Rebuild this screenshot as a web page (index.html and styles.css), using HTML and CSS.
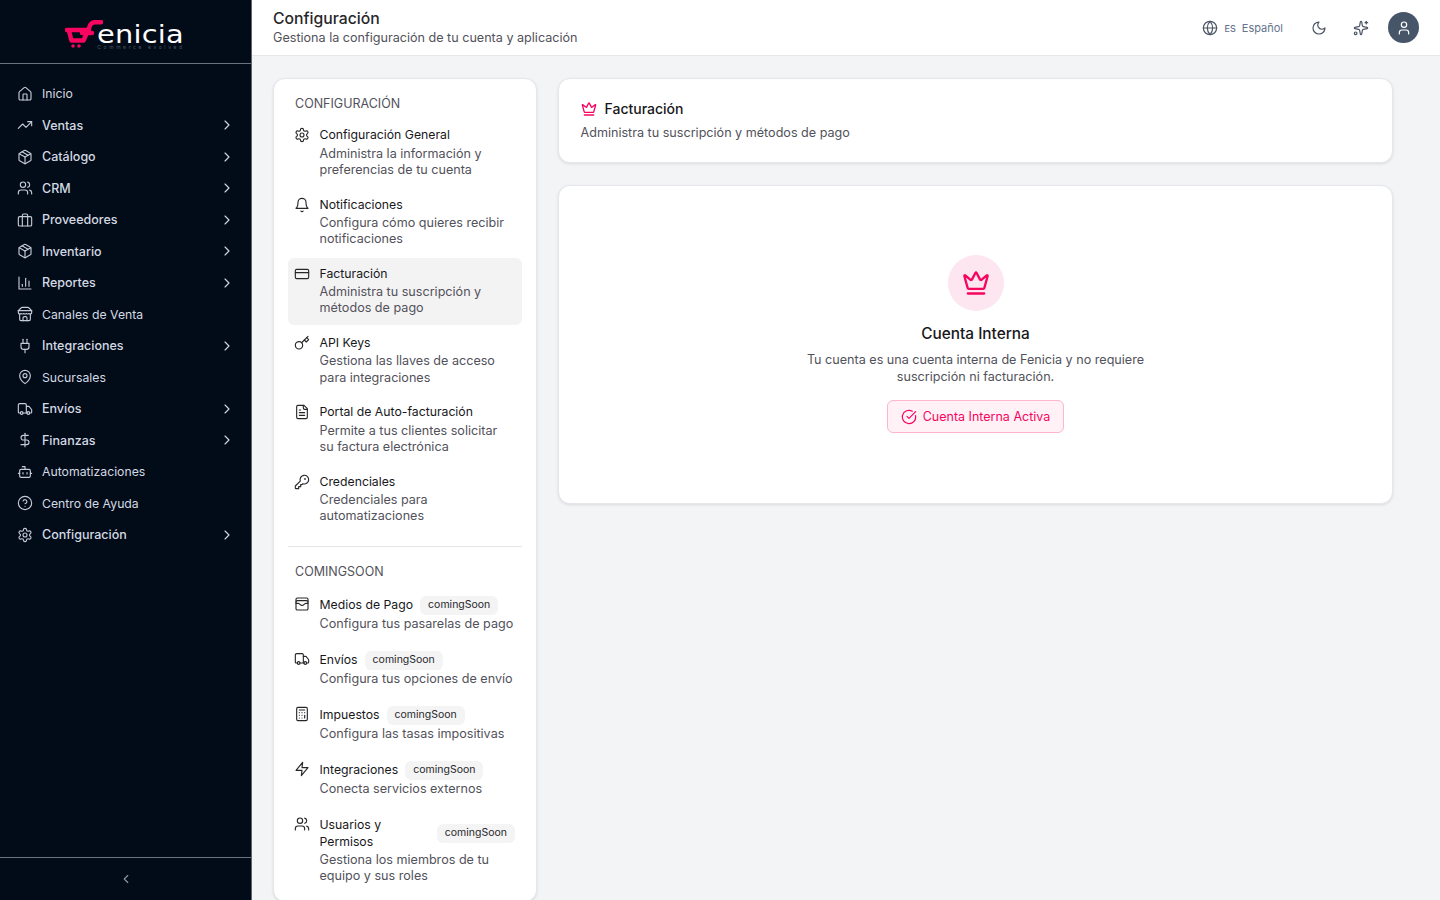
FILE: index.html
```html
<!DOCTYPE html>
<html lang="es">
<head>
<meta charset="utf-8">
<title>Configuración</title>
<link rel="stylesheet" href="styles.css">
</head>
<body>
<svg class="sprite" xmlns="http://www.w3.org/2000/svg">
<symbol id="i-home" viewBox="0 0 24 24"><path d="M15 21v-8a1 1 0 0 0-1-1h-4a1 1 0 0 0-1 1v8"/><path d="M3 10a2 2 0 0 1 .709-1.528l7-5.999a2 2 0 0 1 2.582 0l7 5.999A2 2 0 0 1 21 10v9a2 2 0 0 1-2 2H5a2 2 0 0 1-2-2z"/></symbol>
<symbol id="i-trend" viewBox="0 0 24 24"><polyline points="22 7 13.5 15.5 8.5 10.5 2 17"/><polyline points="16 7 22 7 22 13"/></symbol>
<symbol id="i-package" viewBox="0 0 24 24"><path d="M11 21.730a2 2 0 0 0 2 0l7-4A2 2 0 0 0 21 16V8a2 2 0 0 0-1-1.730l-7-4a2 2 0 0 0-2 0l-7 4A2 2 0 0 0 3 8v8a2 2 0 0 0 1 1.730z"/><path d="M12 22V12"/><path d="m3.300 7 8.700 5 8.700-5"/><path d="m7.500 4.270 9 5.150"/></symbol>
<symbol id="i-users" viewBox="0 0 24 24"><path d="M16 21v-2a4 4 0 0 0-4-4H6a4 4 0 0 0-4 4v2"/><circle cx="9" cy="7" r="4"/><path d="M22 21v-2a4 4 0 0 0-3-3.870"/><path d="M16 3.130a4 4 0 0 1 0 7.750"/></symbol>
<symbol id="i-briefcase" viewBox="0 0 24 24"><rect x="2" y="7" width="20" height="14" rx="2"/><path d="M16 21V5a2 2 0 0 0-2-2h-4a2 2 0 0 0-2 2v16"/></symbol>
<symbol id="i-chart" viewBox="0 0 24 24"><path d="M3 3v18h18"/><path d="M18 17V9"/><path d="M13 17V5"/><path d="M8 17v-3"/></symbol>
<symbol id="i-store" viewBox="0 0 24 24"><path d="m2 7 4.410-4.410A2 2 0 0 1 7.830 2h8.340a2 2 0 0 1 1.420.590L22 7"/><path d="M4 12v8a2 2 0 0 0 2 2h12a2 2 0 0 0 2-2v-8"/><path d="M15 22v-4a2 2 0 0 0-2-2h-2a2 2 0 0 0-2 2v4"/><path d="M2 7h20"/><path d="M22 7v3a2 2 0 0 1-2 2a2.700 2.700 0 0 1-1.590-.630.700.700 0 0 0-.820 0A2.700 2.700 0 0 1 16 12a2.700 2.700 0 0 1-1.590-.630.700.700 0 0 0-.820 0A2.700 2.700 0 0 1 12 12a2.700 2.700 0 0 1-1.590-.630.700.700 0 0 0-.820 0A2.700 2.700 0 0 1 8 12a2.700 2.700 0 0 1-1.590-.630.700.700 0 0 0-.820 0A2.700 2.700 0 0 1 4 12a2 2 0 0 1-2-2V7"/></symbol>
<symbol id="i-plug" viewBox="0 0 24 24"><path d="M12 22v-5"/><path d="M9 8V2"/><path d="M15 8V2"/><path d="M18 8v5a4 4 0 0 1-4 4h-4a4 4 0 0 1-4-4V8Z"/></symbol>
<symbol id="i-pin" viewBox="0 0 24 24"><path d="M20 10c0 6-8 12-8 12s-8-6-8-12a8 8 0 0 1 16 0Z"/><circle cx="12" cy="10" r="3"/></symbol>
<symbol id="i-truck" viewBox="0 0 24 24"><path d="M14 18V6a2 2 0 0 0-2-2H4a2 2 0 0 0-2 2v11a1 1 0 0 0 1 1h2"/><path d="M15 18H9"/><path d="M19 18h2a1 1 0 0 0 1-1v-3.650a1 1 0 0 0-.220-.624l-3.480-4.350A1 1 0 0 0 17.520 8H14"/><circle cx="17" cy="18" r="2"/><circle cx="7" cy="18" r="2"/></symbol>
<symbol id="i-dollar" viewBox="0 0 24 24"><path d="M12 2v20"/><path d="M17 5H9.500a3.500 3.500 0 0 0 0 7h5a3.500 3.500 0 0 1 0 7H6"/></symbol>
<symbol id="i-bot" viewBox="0 0 24 24"><path d="M12 8V4H8"/><rect x="4" y="8" width="16" height="12" rx="2"/><path d="M2 14h2"/><path d="M20 14h2"/><path d="M15 13v2"/><path d="M9 13v2"/></symbol>
<symbol id="i-help" viewBox="0 0 24 24"><circle cx="12" cy="12" r="10"/><path d="M9.090 9a3 3 0 0 1 5.830 1c0 2-3 3-3 3"/><path d="M12 17h.010"/></symbol>
<symbol id="i-gear" viewBox="0 0 24 24"><path d="M12.220 2h-.440a2 2 0 0 0-2 2v.180a2 2 0 0 1-1 1.730l-.430.250a2 2 0 0 1-2 0l-.150-.080a2 2 0 0 0-2.730.730l-.220.380a2 2 0 0 0 .730 2.730l.150.100a2 2 0 0 1 1 1.720v.510a2 2 0 0 1-1 1.740l-.150.090a2 2 0 0 0-.730 2.730l.220.380a2 2 0 0 0 2.730.730l.150-.080a2 2 0 0 1 2 0l.430.250a2 2 0 0 1 1 1.730V20a2 2 0 0 0 2 2h.440a2 2 0 0 0 2-2v-.180a2 2 0 0 1 1-1.730l.430-.250a2 2 0 0 1 2 0l.150.080a2 2 0 0 0 2.730-.730l.220-.390a2 2 0 0 0-.730-2.730l-.150-.080a2 2 0 0 1-1-1.740v-.500a2 2 0 0 1 1-1.740l.150-.090a2 2 0 0 0 .730-2.730l-.220-.380a2 2 0 0 0-2.730-.730l-.150.080a2 2 0 0 1-2 0l-.430-.250a2 2 0 0 1-1-1.730V4a2 2 0 0 0-2-2z"/><circle cx="12" cy="12" r="3"/></symbol>
<symbol id="i-bell" viewBox="0 0 24 24"><path d="M6 8a6 6 0 0 1 12 0c0 7 3 9 3 9H3s3-2 3-9"/><path d="M10.300 21a1.940 1.940 0 0 0 3.400 0"/></symbol>
<symbol id="i-card" viewBox="0 0 24 24"><rect x="2" y="5" width="20" height="14" rx="2"/><path d="M2 10h20"/></symbol>
<symbol id="i-key" viewBox="0 0 24 24"><circle cx="7.500" cy="15.500" r="5.500"/><path d="m21 2-9.600 9.600"/><path d="m15.500 7.500 3 3L22 7l-3-3"/></symbol>
<symbol id="i-file" viewBox="0 0 24 24"><path d="M15 2H6a2 2 0 0 0-2 2v16a2 2 0 0 0 2 2h12a2 2 0 0 0 2-2V7Z"/><path d="M14 2v4a2 2 0 0 0 2 2h4"/><path d="M10 9H8"/><path d="M16 13H8"/><path d="M16 17H8"/></symbol>
<symbol id="i-keyround" viewBox="0 0 24 24"><path d="M2 18v3c0 .600.400 1 1 1h4v-3h3v-3h2l1.400-1.400a6.500 6.500 0 1 0-4-4Z"/><circle cx="16.500" cy="7.500" r=".500"/></symbol>
<symbol id="i-wallet" viewBox="0 0 24 24"><rect x="3" y="3" width="18" height="18" rx="2"/><path d="M3 9a2 2 0 0 1 2-2h14a2 2 0 0 1 2 2"/><path d="M3 11h3c.800 0 1.600.300 2.100.900l1.100.900c1.600 1.600 4.100 1.600 5.700 0l1.100-.900c.500-.500 1.300-.900 2.100-.900H21"/></symbol>
<symbol id="i-calc" viewBox="0 0 24 24"><rect x="4" y="2" width="16" height="20" rx="2"/><path d="M8 6h8"/><path d="M16 14v4"/><path d="M16 10h.010"/><path d="M12 10h.010"/><path d="M8 10h.010"/><path d="M12 14h.010"/><path d="M8 14h.010"/><path d="M12 18h.010"/><path d="M8 18h.010"/></symbol>
<symbol id="i-zap" viewBox="0 0 24 24"><path d="M13 2 3 14h9l-1 8 10-12h-9l1-8z"/></symbol>
<symbol id="i-globe" viewBox="0 0 24 24"><circle cx="12" cy="12" r="10"/><path d="M12 2a14.500 14.500 0 0 0 0 20 14.500 14.500 0 0 0 0-20"/><path d="M2 12h20"/></symbol>
<symbol id="i-moon" viewBox="0 0 24 24"><path d="M12 3a6 6 0 0 0 9 9 9 9 0 1 1-9-9Z"/></symbol>
<symbol id="i-sparkles" viewBox="0 0 24 24"><path d="M11.017 2.814a1 1 0 0 1 1.966 0l1.051 5.558a2 2 0 0 0 1.594 1.594l5.558 1.051a1 1 0 0 1 0 1.966l-5.558 1.051a2 2 0 0 0-1.594 1.594l-1.051 5.558a1 1 0 0 1-1.966 0l-1.051-5.558a2 2 0 0 0-1.594-1.594l-5.558-1.051a1 1 0 0 1 0-1.966l5.558-1.051a2 2 0 0 0 1.594-1.594z"/><path d="M20 2v4"/><path d="M22 4h-4"/><circle cx="4" cy="20" r="2"/></symbol>
<symbol id="i-user" viewBox="0 0 24 24"><path d="M19 21v-2a4 4 0 0 0-4-4H9a4 4 0 0 0-4 4v2"/><circle cx="12" cy="7" r="4"/></symbol>
<symbol id="i-crown" viewBox="0 0 24 24"><path d="M11.562 3.266a.500.500 0 0 1 .876 0L15.390 8.870a1 1 0 0 0 1.516.294L21.183 5.500a.500.500 0 0 1 .798.519l-2.834 10.246a1 1 0 0 1-.956.734H5.810a1 1 0 0 1-.957-.734L2.020 6.020a.500.500 0 0 1 .798-.519l4.276 3.664a1 1 0 0 0 1.516-.294z"/><path d="M5 21h14"/></symbol>
<symbol id="i-check" viewBox="0 0 24 24"><path d="M21.801 10A10 10 0 1 1 17 3.335"/><path d="m9 11 3 3L22 4"/></symbol>
<symbol id="i-right" viewBox="0 0 24 24"><path d="m9 18 6-6-6-6"/></symbol>
<symbol id="i-left" viewBox="0 0 24 24"><path d="m15 18-6-6 6-6"/></symbol>
</svg>

<div class="app">
  <aside class="sidebar">
    <div class="brand">
      <div class="logo">
        <svg class="logo-mark" viewBox="0 0 38 28" xmlns="http://www.w3.org/2000/svg">
          <path class="logo-cart" d="M2 10H24M4 11l2.500 9.500h12L24 8C25 4 27 2.200 30 2.200h6M17 13h10"/>
          <circle class="logo-wheel" cx="8" cy="26" r="1.800"/>
          <circle class="logo-wheel" cx="14" cy="26" r="1.800"/>
        </svg>
        <div class="logo-words">
          <span class="logo-name">enicia</span>
          <span class="logo-tag">Commerce evolved</span>
        </div>
      </div>
    </div>
    <nav class="nav">
      <a class="nav-item"><svg class="ico"><use href="#i-home"/></svg><span>Inicio</span></a>
      <a class="nav-item sub"><svg class="ico"><use href="#i-trend"/></svg><span>Ventas</span><svg class="chev"><use href="#i-right"/></svg></a>
      <a class="nav-item sub"><svg class="ico"><use href="#i-package"/></svg><span>Catálogo</span><svg class="chev"><use href="#i-right"/></svg></a>
      <a class="nav-item sub"><svg class="ico"><use href="#i-users"/></svg><span>CRM</span><svg class="chev"><use href="#i-right"/></svg></a>
      <a class="nav-item sub"><svg class="ico"><use href="#i-briefcase"/></svg><span>Proveedores</span><svg class="chev"><use href="#i-right"/></svg></a>
      <a class="nav-item sub"><svg class="ico"><use href="#i-package"/></svg><span>Inventario</span><svg class="chev"><use href="#i-right"/></svg></a>
      <a class="nav-item sub"><svg class="ico"><use href="#i-chart"/></svg><span>Reportes</span><svg class="chev"><use href="#i-right"/></svg></a>
      <a class="nav-item"><svg class="ico"><use href="#i-store"/></svg><span>Canales de Venta</span></a>
      <a class="nav-item sub"><svg class="ico"><use href="#i-plug"/></svg><span>Integraciones</span><svg class="chev"><use href="#i-right"/></svg></a>
      <a class="nav-item"><svg class="ico"><use href="#i-pin"/></svg><span>Sucursales</span></a>
      <a class="nav-item sub"><svg class="ico"><use href="#i-truck"/></svg><span>Envíos</span><svg class="chev"><use href="#i-right"/></svg></a>
      <a class="nav-item sub"><svg class="ico"><use href="#i-dollar"/></svg><span>Finanzas</span><svg class="chev"><use href="#i-right"/></svg></a>
      <a class="nav-item"><svg class="ico"><use href="#i-bot"/></svg><span>Automatizaciones</span></a>
      <a class="nav-item"><svg class="ico"><use href="#i-help"/></svg><span>Centro de Ayuda</span></a>
      <a class="nav-item sub"><svg class="ico"><use href="#i-gear"/></svg><span>Configuración</span><svg class="chev"><use href="#i-right"/></svg></a>
    </nav>
    <div class="collapse"><svg class="collapse-ico"><use href="#i-left"/></svg></div>
  </aside>

  <div class="main">
    <header class="topbar">
      <div class="topbar-text">
        <h1>Configuración</h1>
        <p>Gestiona la configuración de tu cuenta y aplicación</p>
      </div>
      <div class="tools">
        <div class="lang"><svg class="ico"><use href="#i-globe"/></svg><span class="lang-code">ES</span><span class="lang-name">Español</span></div>
        <svg class="ico tool-moon"><use href="#i-moon"/></svg>
        <svg class="ico tool-spark"><use href="#i-sparkles"/></svg>
        <div class="avatar"><svg class="ico"><use href="#i-user"/></svg></div>
      </div>
    </header>

    <div class="content">
      <section class="card menu">
        <h2 class="menu-head">CONFIGURACIÓN</h2>
        <div class="menu-list">
          <a class="menu-item"><svg class="ico"><use href="#i-gear"/></svg><div><div class="mi-title">Configuración General</div><p>Administra la información y preferencias de tu cuenta</p></div></a>
          <a class="menu-item"><svg class="ico"><use href="#i-bell"/></svg><div><div class="mi-title">Notificaciones</div><p>Configura cómo quieres recibir notificaciones</p></div></a>
          <a class="menu-item active"><svg class="ico"><use href="#i-card"/></svg><div><div class="mi-title">Facturación</div><p>Administra tu suscripción y métodos de pago</p></div></a>
          <a class="menu-item"><svg class="ico"><use href="#i-key"/></svg><div><div class="mi-title">API Keys</div><p>Gestiona las llaves de acceso para integraciones</p></div></a>
          <a class="menu-item"><svg class="ico"><use href="#i-file"/></svg><div><div class="mi-title">Portal de Auto-facturación</div><p>Permite a tus clientes solicitar su factura electrónica</p></div></a>
          <a class="menu-item"><svg class="ico"><use href="#i-keyround"/></svg><div><div class="mi-title">Credenciales</div><p>Credenciales para automatizaciones</p></div></a>
        </div>
        <hr class="menu-rule">
        <h2 class="menu-head">COMINGSOON</h2>
        <div class="menu-list soon-list">
          <a class="menu-item soon"><svg class="ico"><use href="#i-wallet"/></svg><div class="mi-body"><div class="mi-row"><div class="mi-title">Medios de Pago</div><span class="badge">comingSoon</span></div><p>Configura tus pasarelas de pago</p></div></a>
          <a class="menu-item soon"><svg class="ico"><use href="#i-truck"/></svg><div class="mi-body"><div class="mi-row"><div class="mi-title">Envíos</div><span class="badge">comingSoon</span></div><p>Configura tus opciones de envío</p></div></a>
          <a class="menu-item soon"><svg class="ico"><use href="#i-calc"/></svg><div class="mi-body"><div class="mi-row"><div class="mi-title">Impuestos</div><span class="badge">comingSoon</span></div><p>Configura las tasas impositivas</p></div></a>
          <a class="menu-item soon"><svg class="ico"><use href="#i-zap"/></svg><div class="mi-body"><div class="mi-row"><div class="mi-title">Integraciones</div><span class="badge">comingSoon</span></div><p>Conecta servicios externos</p></div></a>
          <a class="menu-item soon"><svg class="ico"><use href="#i-users"/></svg><div class="mi-body"><div class="mi-row"><div class="mi-title">Usuarios y Permisos</div><span class="badge">comingSoon</span></div><p>Gestiona los miembros de tu equipo y sus roles</p></div></a>
        </div>
      </section>

      <div class="detail">
        <section class="card billing-head">
          <h2><svg class="crown-sm"><use href="#i-crown"/></svg>Facturación</h2>
          <p>Administra tu suscripción y métodos de pago</p>
        </section>
        <section class="card internal">
          <div class="crown-disc"><svg class="crown-lg"><use href="#i-crown"/></svg></div>
          <h3>Cuenta Interna</h3>
          <p>Tu cuenta es una cuenta interna de Fenicia y no requiere suscripción ni facturación.</p>
          <div class="active-pill"><svg class="ico"><use href="#i-check"/></svg>Cuenta Interna Activa</div>
        </section>
      </div>
    </div>
  </div>
</div>
</body>
</html>
```

FILE: styles.css
```css
* { box-sizing: border-box; }
html, body { margin: 0; height: 100%; overflow: hidden; }
body { font-family: Inter, "Liberation Sans", sans-serif; font-size: 12.6px; color: #18181b; background: #f3f4f6; }
h1, h2, h3, p { margin: 0; }
.sprite { display: none; }
.ico { width: 16px; height: 16px; flex: none; fill: none; stroke: currentColor; stroke-width: 1.8; stroke-linecap: round; stroke-linejoin: round; }

.app { display: flex; height: 900px; }

.sidebar { width: 252px; flex: none; display: flex; flex-direction: column; background: #020b18; border-right: 1px solid #5d6673; color: #d3d9e2; }
.brand { height: 64px; flex: none; border-bottom: 1px solid #6b7280; display: flex; justify-content: center; align-items: flex-start; padding-top: 20px; padding-right: 1px; }
.logo { display: flex; align-items: flex-start; }
.logo-mark { width: 38px; height: 28px; flex: none; fill: none; }
.logo-cart { stroke: #f8055f; stroke-width: 4.5; stroke-linecap: round; stroke-linejoin: round; fill: none; }
.logo-wheel { fill: #f8055f; }
.logo-words { display: flex; flex-direction: column; margin-left: -6px; margin-top: 5px; }
.logo-name { font-family: "DejaVu Sans", sans-serif; font-size: 24px; line-height: 20px; color: #fff; letter-spacing: .2px; font-weight: 400; transform: scaleX(1.2); transform-origin: left center; }
.logo-tag { font-size: 5px; line-height: 5px; letter-spacing: 2.6px; color: #4b5563; white-space: nowrap; }

.nav { flex: 1; padding: 14px 0 0 17px; display: flex; flex-direction: column; }
.nav-item { display: flex; align-items: center; height: 31.5px; padding-right: 16px; line-height: 19.5px; font-size: 12.25px; }
.nav-item .ico { margin-right: 9px; stroke-width: 1.7; color: #c6ccd5; }
.nav-item span { flex: 1; }
.nav-item.sub { font-weight: 500; font-size: 12.5px; }
.chev { width: 16px; height: 16px; flex: none; fill: none; stroke: currentColor; stroke-width: 1.7; stroke-linecap: round; stroke-linejoin: round; }
.collapse { height: 43px; flex: none; border-top: 1px solid #6b7280; display: flex; justify-content: center; align-items: center; color: #8b93a0; }
.collapse-ico { width: 14px; height: 14px; fill: none; stroke: currentColor; stroke-width: 2; stroke-linecap: round; stroke-linejoin: round; }

.main { flex: 1; min-width: 0; display: flex; flex-direction: column; }
.topbar { height: 56px; flex: none; background: #fff; border-bottom: 1px solid #e5e7eb; display: flex; align-items: center; justify-content: space-between; padding: 0 21px; }
.topbar h1 { font-size: 15.75px; line-height: 20px; font-weight: 500; color: #27272a; }
.topbar p { line-height: 16px; color: #52525b; margin-top: 1px; }
.tools { display: flex; align-items: center; color: #4b5563; }
.lang { display: flex; align-items: center; font-size: 11px; color: #64748b; }
.lang .ico { color: #4b5563; }
.lang-code { font-size: 9px; font-weight: 500; margin: 2px 6px 0 7px; }
.tool-moon { margin-left: 28px; }
.tool-spark { margin-left: 26px; }
.avatar { width: 31px; height: 31px; border-radius: 50%; background: #475569; color: #fff; display: flex; align-items: center; justify-content: center; margin-left: 19px; }

.content { padding: 22px 21px; display: grid; grid-template-columns: 264px 835px; column-gap: 21px; align-items: start; }
.card { background: #fff; border: 1px solid #e5e7eb; border-radius: 12px; box-shadow: 0 1px 3px rgba(0,0,0,.1); }

.menu { padding: 17px 14px 8px; }
.menu-head { font-size: 12.5px; line-height: 16.25px; font-weight: 400; color: #52525b; padding-left: 7px; margin-bottom: 7px; }
.menu-list { display: flex; flex-direction: column; gap: 2.5px; }
.soon-list { gap: 2.25px; }
.menu-item { display: flex; gap: 9.5px; padding: 8px 7px 8px 6px; border-radius: 6px; }
.menu-item.active { background: #f4f3f4; }
.menu-item .ico { color: #27272a; stroke-width: 1.7; }
.mi-title { font-size: 12.25px; line-height: 16.25px; color: #18181b; }
.menu-item p { line-height: 16.25px; color: #52525b; margin-top: 2px; padding-right: 4px; }
.menu-item.soon .mi-title { line-height: 17px; margin-bottom: 1px; }
.menu-item.soon p { margin-top: 1.5px; padding-right: 0; }
.mi-body { flex: 1; min-width: 0; }
.mi-row { display: flex; align-items: center; gap: 7px; min-height: 18.5px; }
.badge { flex: none; height: 19px; padding: 0 8px; border-radius: 6px; background: #f4f4f5; font-size: 10.5px; line-height: 18px; color: #27272a; }
.menu-rule { border: 0; border-top: 1px solid #e5e7eb; margin: 14px 0 17px; }

.detail { display: flex; flex-direction: column; gap: 22px; }
.billing-head { padding: 20px 21.5px 0; height: 85px; }
.billing-head h2 { display: flex; align-items: center; gap: 8px; font-size: 14px; line-height: 20px; font-weight: 500; color: #18181b; }
.billing-head p { margin-top: 6px; line-height: 16px; color: #52525b; }
.crown-sm { width: 16px; height: 16px; fill: none; stroke: #f5055f; stroke-width: 2; stroke-linecap: round; stroke-linejoin: round; }
.internal { padding: 69px 21px 70px; display: flex; flex-direction: column; align-items: center; text-align: center; }
.crown-disc { width: 56px; height: 56px; border-radius: 50%; background: #fde6ef; display: flex; align-items: center; justify-content: center; }
.crown-lg { width: 28px; height: 28px; fill: none; stroke: #f5055f; stroke-width: 2; stroke-linecap: round; stroke-linejoin: round; }
.internal h3 { font-size: 15.4px; line-height: 20px; font-weight: 500; color: #18181b; margin-top: 13px; }
.internal p { width: 360px; line-height: 17px; color: #52525b; margin-top: 7px; }
.active-pill { display: flex; align-items: center; gap: 6px; height: 33px; padding: 0 12.5px; margin-top: 15px; border: 1px solid #fdb5d0; border-radius: 6px; background: #fff1f6; color: #f5055f; font-size: 12.5px; }
```
